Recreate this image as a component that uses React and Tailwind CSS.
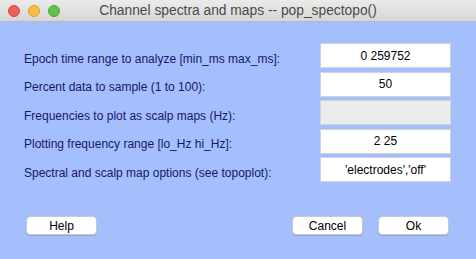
export default function App() {
  const rows = [
    ["Epoch time range to analyze [min_ms max_ms]:", "0 259752", false],
    ["Percent data to sample (1 to 100):", "50", false],
    ["Frequencies to plot as scalp maps (Hz):", "", true],
    ["Plotting frequency range [lo_Hz hi_Hz]:", "2 25", false],
    ["Spectral and scalp map options (see topoplot):", "'electrodes','off'", false],
  ];
  return (
    <div
      className="w-[476px] h-[259px] flex flex-col bg-[#a5bffd] overflow-hidden"
      style={{ fontFamily: '"Liberation Sans", Arial, sans-serif' }}
    >
      <div className="h-[22px] shrink-0 relative flex items-center justify-center bg-gradient-to-b from-[#ebebeb] to-[#d6d6d6] border-b border-[#b9b9b9]">
        <div className="absolute left-[8px] top-[5px] flex gap-[8px]">
          <div className="w-[12px] h-[12px] rounded-full bg-[#ee5f57] border border-[#d9473f]" />
          <div className="w-[12px] h-[12px] rounded-full bg-[#f8bd3e] border border-[#dfa02a]" />
          <div className="w-[12px] h-[12px] rounded-full bg-[#5fc44d] border border-[#48a837]" />
        </div>
        <span className="text-[13.8px] text-[#4a4a4a] leading-none">
          Channel spectra and maps -- pop_spectopo()
        </span>
      </div>
      <div className="flex flex-col gap-[3.5px] pt-[21px] pl-[24px] pr-[25px]">
        {rows.map(([label, value, disabled], i) => (
          <div key={i} className="flex items-center justify-between h-[25px]">
            <span className="text-[12px] text-[#16166a] pt-[6px]">{label}</span>
            <div
              className={`w-[131px] h-[25px] flex items-center justify-center border border-[#d3d3d3] text-[12px] text-black ${disabled ? "bg-[#ececec]" : "bg-white"}`}
            >
              {value}
            </div>
          </div>
        ))}
      </div>
      <div className="flex items-center mt-[34px] pl-[26px] pr-[27px]">
        <button className="w-[71px] h-[19px] rounded-[4px] bg-white border border-[#c9c9c9] shadow-[0_0.5px_1px_rgba(0,0,0,0.15)] text-[12px] text-black leading-none">
          Help
        </button>
        <div className="flex-1" />
        <button className="w-[71px] h-[19px] rounded-[4px] bg-white border border-[#c9c9c9] shadow-[0_0.5px_1px_rgba(0,0,0,0.15)] text-[12px] text-black leading-none">
          Cancel
        </button>
        <button className="ml-[15px] w-[71px] h-[19px] rounded-[4px] bg-white border border-[#c9c9c9] shadow-[0_0.5px_1px_rgba(0,0,0,0.15)] text-[12px] text-black leading-none">
          Ok
        </button>
      </div>
    </div>
  );
}
